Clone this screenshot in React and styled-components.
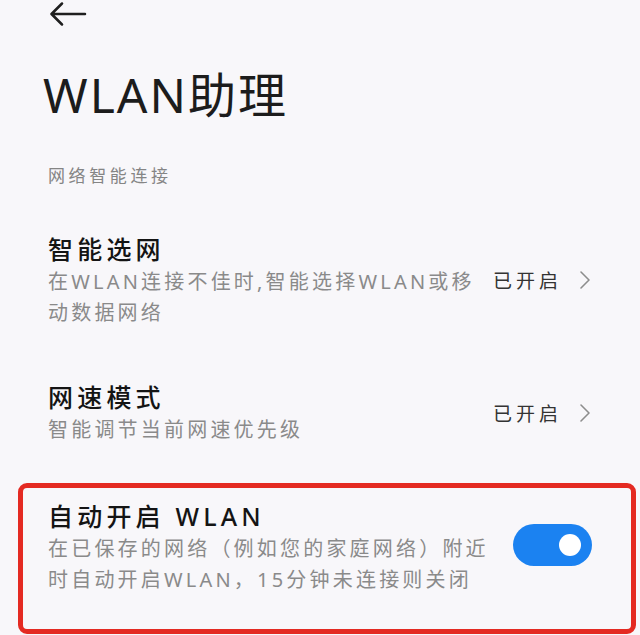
import React from "react";
import styled, { createGlobalStyle } from "styled-components";

const GlobalStyle = createGlobalStyle`
  html, body {
    margin: 0;
    padding: 0;
    background: #f8f7fa;
  }
  body {
    font-family: "Noto Sans", "Noto Sans CJK SC", sans-serif;
    -webkit-font-smoothing: antialiased;
  }
`;

const Screen = styled.div`
  width: 640px;
  height: 635px;
  overflow: hidden;
  background: #f8f7fa;
  display: flex;
  flex-direction: column;
`;

const TopBar = styled.div`
  height: 30px;
  padding: 2px 0 0 49px;
  box-sizing: border-box;
  display: flex;
  align-items: flex-start;
`;

const BackButton = styled.button`
  border: 0;
  background: none;
  padding: 0;
  width: 38px;
  height: 26px;
  display: flex;
  cursor: pointer;
`;

const PageTitle = styled.h1`
  margin: 37px 0 0 43px;
  font-size: 48px;
  font-weight: 400;
  line-height: 56px;
  color: #1c1c1c;
  letter-spacing: 2px;
`;

const SectionLabel = styled.div`
  margin: 41px 0 0 48px;
  font-size: 17px;
  line-height: 24px;
  letter-spacing: 3.6px;
  color: #858585;
`;

const SettingRow = styled.div`
  display: flex;
  align-items: center;
  gap: 14px;
  padding: 0 48px;
  margin-top: ${(p) => p.$top}px;
`;

const TextColumn = styled.div`
  flex: 1;
  min-width: 0;
  display: flex;
  flex-direction: column;
`;

const RowTitle = styled.div`
  font-size: 25px;
  line-height: 34px;
  font-weight: 500;
  letter-spacing: 4.2px;
  color: #141414;
`;

const RowHint = styled.div`
  font-size: 20px;
  line-height: 31px;
  letter-spacing: 3.2px;
  color: #8a8a8a;
  max-width: ${(p) => p.$max || 440}px;
`;

const Status = styled.div`
  display: flex;
  align-items: center;
  gap: 16px;
  font-size: 19px;
  letter-spacing: 4px;
  color: #333;
  white-space: nowrap;
`;

const Highlight = styled.div`
  margin: 38px 4px 0 18px;
  border: 5px solid #e42a22;
  border-radius: 9px;
  padding: 11px 39px 34px 25px;
  display: flex;
  align-items: center;
  gap: 14px;
`;

const Toggle = styled.button`
  flex: none;
  width: 79px;
  height: 42px;
  margin-bottom: 4px;
  border: 0;
  padding: 0 11px 0 0;
  border-radius: 21px;
  background: #1b82f1;
  display: flex;
  align-items: center;
  justify-content: flex-end;
  cursor: pointer;
`;

const Knob = styled.span`
  width: 22px;
  height: 22px;
  border-radius: 50%;
  background: #fff;
`;

const BackArrow = () => (
  <svg width="38" height="26" viewBox="0 0 38 26" fill="none">
    <path
      d="M36 12H3M13 1.5L2.5 12L13 22.5"
      stroke="#1f1f1f"
      strokeWidth="2.5"
      strokeLinecap="round"
      strokeLinejoin="round"
    />
  </svg>
);

const Chevron = () => (
  <svg width="14" height="20" viewBox="0 0 14 20" fill="none">
    <path d="M3 2L11 10L3 18" stroke="#8d8d8d" strokeWidth="1.6" strokeLinecap="round" strokeLinejoin="round" />
  </svg>
);

export default function App() {
  return (
    <Screen>
      <GlobalStyle />
      <TopBar>
        <BackButton aria-label="返回">
          <BackArrow />
        </BackButton>
      </TopBar>
      <PageTitle>WLAN助理</PageTitle>
      <SectionLabel>网络智能连接</SectionLabel>

      <SettingRow $top={44}>
        <TextColumn>
          <RowTitle>智能选网</RowTitle>
          <RowHint $max={438}>在WLAN连接不佳时,智能选择WLAN或移动数据网络</RowHint>
        </TextColumn>
        <Status>
          已开启
          <Chevron />
        </Status>
      </SettingRow>

      <SettingRow $top={52}>
        <TextColumn>
          <RowTitle>网速模式</RowTitle>
          <RowHint>智能调节当前网速优先级</RowHint>
        </TextColumn>
        <Status>
          已开启
          <Chevron />
        </Status>
      </SettingRow>

      <Highlight>
        <TextColumn>
          <RowTitle>自动开启 WLAN</RowTitle>
          <RowHint $max={452}>在已保存的网络（例如您的家庭网络）附近时自动开启WLAN，15分钟未连接则关闭</RowHint>
        </TextColumn>
        <Toggle aria-label="自动开启 WLAN">
          <Knob />
        </Toggle>
      </Highlight>
    </Screen>
  );
}
